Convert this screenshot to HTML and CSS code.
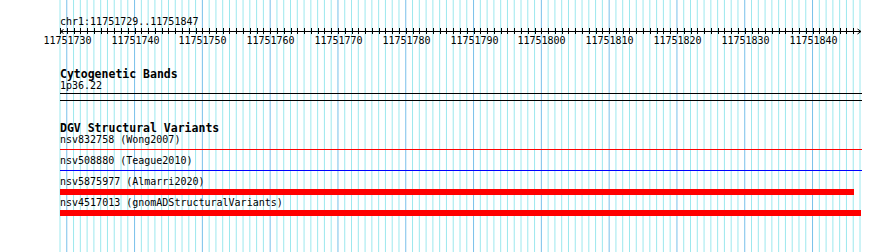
FILE: index.html
```html
<!DOCTYPE html>
<html lang="en">
<head>
    <meta charset="UTF-8">
    <title>chr1:11751729..11751847</title>
    <link rel="stylesheet" href="styles.css">
    <script src="script.js" defer></script>
</head>
<body>
    <div class="view">
        <svg class="grid" id="grid" width="890" height="252"></svg>

        <div class="content">
            <div class="locus">chr1:11751729..11751847</div>
            <svg class="scale" id="scale" width="890" height="22"></svg>

            <div class="track">
                <h3 class="track-title">Cytogenetic Bands</h3>
                <div class="label">1p36.22</div>
                <div class="band"></div>
            </div>

            <div class="track track-dgv">
                <h3 class="track-title">DGV Structural Variants</h3>

                <div class="feature">
                    <div class="label">nsv832758 (Wong2007)</div>
                    <div class="slot"><div class="line red" style="width: 802px"></div></div>
                </div>
                <div class="feature">
                    <div class="label">nsv508880 (Teague2010)</div>
                    <div class="slot"><div class="line blue" style="width: 802px"></div></div>
                </div>
                <div class="feature">
                    <div class="label">nsv5875977 (Almarri2020)</div>
                    <div class="slot"><div class="bar" style="width: 794px"></div></div>
                </div>
                <div class="feature">
                    <div class="label">nsv4517013 (gnomADStructuralVariants)</div>
                    <div class="slot"><div class="bar" style="width: 801px"></div></div>
                </div>
            </div>
        </div>
    </div>
</body>
</html>
```

FILE: styles.css
```css
* {
    box-sizing: border-box;
    margin: 0;
    padding: 0;
}

body {
    background-color: #fff;
    font-family: 'DejaVu Sans Mono', 'Liberation Mono', monospace;
    font-size: 10px;
    line-height: 12px;
    color: #000;
}

.view {
    position: relative;
    width: 890px;
    height: 252px;
    overflow: hidden;
}

.grid {
    position: absolute;
    top: 0;
    left: 0;
}

.grid .minor {
    stroke: #9ce8ee;
    stroke-width: 1;
}

.grid .major {
    stroke: #78c0ea;
    stroke-width: 1;
}

.content {
    position: relative;
}

.locus {
    margin-top: 16px;
    padding-left: 60px;
}

.scale {
    display: block;
}

.scale line,
.scale polyline {
    stroke: #000;
    stroke-width: 1;
    fill: none;
}

.scale text {
    font-family: 'DejaVu Sans Mono', monospace;
    font-size: 10px;
    fill: #000;
}

.track {
    margin-top: 18px;
    padding-left: 60px;
}

.track-dgv {
    margin-top: 21px;
}

.track-title {
    font-size: 11.5px;
    line-height: 12px;
    font-weight: bold;
}

.band {
    margin-top: 1px;
    width: 802px;
    height: 8px;
    border-top: 1px solid #000;
    border-bottom: 1px solid #000;
}

.feature {
    padding-bottom: 2px;
}

.slot {
    display: flow-root;
    height: 7px;
}

.slot .line {
    margin-top: 3px;
    height: 1px;
}

.line.red {
    background-color: #f00;
}

.line.blue {
    background-color: #00f;
}

.slot .bar {
    margin-top: 1px;
    height: 6px;
    background-color: #f00;
}
```

FILE: script.js
```js
const START = 11751729;
const END = 11751847;
const X0 = 60;
const PX = 800 / (END - START);
const NS = 'http://www.w3.org/2000/svg';

function el(parent, name, attrs) {
    const node = document.createElementNS(NS, name);
    for (const k in attrs) node.setAttribute(k, attrs[k]);
    parent.appendChild(node);
    return node;
}

// grid lines, one per base
const grid = document.getElementById('grid');
for (let pos = START; pos <= END; pos++) {
    const x = X0 + (pos - START) * PX;
    el(grid, 'line', {
        x1: x, x2: x, y1: 0, y2: 252,
        class: pos % 10 === 0 ? 'major' : 'minor'
    });
}

// ruler
const scale = document.getElementById('scale');
el(scale, 'line', { x1: X0, x2: 861, y1: 3.5, y2: 3.5 });
for (let pos = START; pos < END; pos++) {
    const x = Math.round(X0 + (pos - START) * PX) + 0.5;
    el(scale, 'line', { x1: x, x2: x, y1: 0, y2: 6 });
    if (pos % 10 === 0) {
        const t = el(scale, 'text', { x: x, y: 16, 'text-anchor': 'middle' });
        t.textContent = pos;
    }
}
el(scale, 'polyline', { points: '63.5,1.5 60.5,3.5 63.5,5.5' });
el(scale, 'polyline', { points: '857.5,1 861,3.5 857.5,6' });
```
